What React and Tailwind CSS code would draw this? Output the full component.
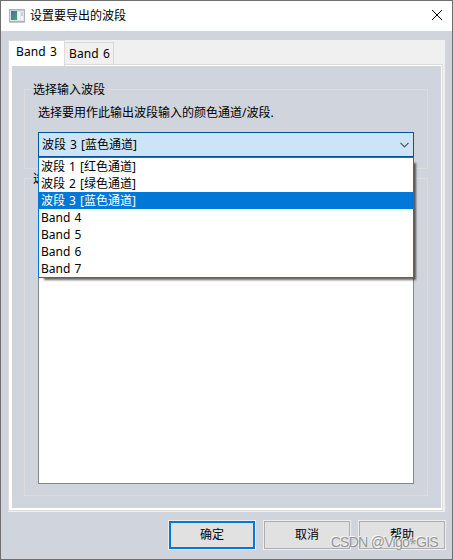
import React from "react";

const options = [
  "波段 1 [红色通道]",
  "波段 2 [绿色通道]",
  "波段 3 [蓝色通道]",
  "Band 4",
  "Band 5",
  "Band 6",
  "Band 7",
];

function AppIcon() {
  return (
    <svg className="mb-px" width="16" height="14" viewBox="0 0 16 14" shapeRendering="crispEdges">
      <defs>
        <linearGradient id="screen" x1="0" y1="0" x2="1" y2="1">
          <stop offset="0" stopColor="#3d6f9c" />
          <stop offset="1" stopColor="#4fa574" />
        </linearGradient>
      </defs>
      <rect x="0.5" y="0.5" width="15" height="12" fill="#e0e4e6" stroke="#aeb2b5" />
      <rect x="1" y="1" width="14" height="1" fill="#c9cfd3" />
      <rect x="2" y="2" width="6" height="9" fill="url(#screen)" />
      <rect x="9" y="3" width="2" height="8" fill="#f7f8f8" />
      <rect x="12" y="3" width="2" height="4" fill="#c3d6da" />
      <rect x="12" y="7" width="2" height="4" fill="#f7f8f8" />
      <rect x="0" y="13" width="16" height="1" fill="#c4c6c8" />
    </svg>
  );
}

function Legend({ children }) {
  return (
    <legend className="ml-[6px] h-[18px] px-[2px] leading-[20px] whitespace-nowrap">
      {children}
    </legend>
  );
}

function DialogButton({ label, primary = false }) {
  return (
    <button
      className={
        "flex h-[28px] w-[86px] items-center justify-center bg-[#e1e1e1] outline outline-1 outline-[#eeeeee] " +
        (primary ? "border-2 border-[#0078d7]" : "border border-[#adadad]")
      }
    >
      {label}
    </button>
  );
}

export default function App() {
  return (
    <div className="relative flex h-[560px] w-[453px] flex-col overflow-hidden border border-[#6e6e6e] bg-[#d0d4dd] font-['Noto_Sans','Noto_Sans_CJK_SC',sans-serif] text-[12px] text-black">
      <header className="flex h-[30px] shrink-0 items-center bg-white pr-[10px] pl-[8px]">
        <AppIcon />
        <span className="ml-[5px] leading-[18px]">设置要导出的波段</span>
        <svg className="mb-[2px] ml-auto" width="10" height="10" viewBox="0 0 10 10" stroke="#000" strokeWidth="1">
          <path d="M0 0l10 10M10 0L0 10" />
        </svg>
      </header>

      <main className="mt-[9px] ml-[7px] flex h-[472px] w-[437px] shrink-0 flex-col bg-[#f0f0f0]">
        <div className="flex h-[24px] shrink-0 items-end">
          <div className="z-10 -mb-[2px] h-[26px] w-[57px] border border-b-0 border-[#dcdcdc] bg-white pl-[7px] leading-[22px] tracking-[0.1px] [word-spacing:1px] whitespace-nowrap">
            Band 3
          </div>
          <div className="h-[22px] w-[49px] border border-b-0 border-l-0 border-[#d9d9d9] bg-[#f0f0f0] pl-[4px] leading-[22px] tracking-[0.1px] [word-spacing:1px] whitespace-nowrap">
            Band 6
          </div>
        </div>

        <div className="h-[447px] w-[435px] shrink-0 border border-[#dcdcdc] bg-white pt-px pr-px pb-[2px] pl-[3px]">
          <div className="h-full bg-[#d0d4dd] pt-[14px] pl-[12px]">
            <fieldset className="h-[89px] w-[404px] border border-[#dcdcdc]">
              <Legend>选择输入波段</Legend>
              <div className="relative pl-[13px]">
                <p className="mt-[6px] h-[18px] leading-[18px] whitespace-nowrap">
                  选择要用作此输出波段输入的颜色通道/波段.
                </p>
                <div className="mt-[10px] flex h-[25px] w-[376px] items-center justify-between border border-[#00559b] bg-[#cce4f7] pr-[4px] pl-[3px]">
                  <span className="[word-spacing:1px]">{options[2]}</span>
                  <svg width="9" height="6" viewBox="0 0 9 6" fill="none" stroke="#555" strokeWidth="1.2">
                    <path d="M.5.8l4 4 4-4" />
                  </svg>
                </div>
                <ul className="absolute top-full left-[13px] z-20 w-[376px] border border-[#0078d7] bg-white shadow-[4px_4px_2px_-2px_rgba(0,0,0,0.6)]">
                  {options.map((option, i) => (
                    <li
                      key={option}
                      className={
                        "h-[17px] pl-[2px] leading-[17px] [word-spacing:1px] " +
                        (i === 2 ? "bg-[#0078d7] text-white" : "")
                      }
                    >
                      {option}
                    </li>
                  ))}
                </ul>
              </div>
            </fieldset>

            <fieldset className="h-[327px] w-[404px] border border-[#dcdcdc]">
              <Legend>选择输出波段</Legend>
              <div className="ml-[13px] h-[297px] w-[376px] border border-[#828790] bg-white" />
            </fieldset>
          </div>
        </div>
      </main>

      <footer className="mt-[9px] flex justify-end gap-[9px] pr-[7px]">
        <DialogButton label="确定" primary />
        <DialogButton label="取消" />
        <DialogButton label="帮助" />
      </footer>

      <span className="absolute right-[14px] bottom-[8px] font-['Liberation_Sans',sans-serif] text-[14px] leading-[18px] tracking-[-0.72px] whitespace-nowrap text-[#989898] [text-shadow:-1px_-1px_0_rgba(255,255,255,0.8)]">
        CSDN @Vigo<span className="font-['Noto_Sans',sans-serif] relative top-[2px] leading-none">*</span>GIS
      </span>
    </div>
  );
}
